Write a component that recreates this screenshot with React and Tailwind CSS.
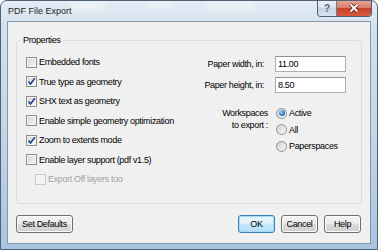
import React from 'react';

function CheckBox({ checked, disabled }) {
  return (
    <span
      className={`flex h-[11px] w-[11px] shrink-0 items-center justify-center border ${
        disabled
          ? 'border-[#cacaca] bg-[#f4f4f4]'
          : 'border-[#8e8f8f] bg-[linear-gradient(135deg,#d2d2d2,#f9f9f9)] shadow-[inset_0_0_0_1px_#f4f4f4]'
      }`}
    >
      {checked && (
        <svg width="9" height="9" viewBox="0 0 9 9">
          <path d="M1.5 4.5 L3.5 7 L7.8 1.2" fill="none" stroke="#21408f" strokeWidth="1.6" />
        </svg>
      )}
    </span>
  );
}

function Radio({ checked }) {
  return (
    <span className="flex h-[11px] w-[11px] shrink-0 items-center justify-center rounded-full border border-[#8e8f8f] bg-[linear-gradient(135deg,#d0d0d0,#fbfbfb)]">
      {checked && (
        <span className="h-[6px] w-[6px] rounded-full bg-[radial-gradient(circle_at_35%_35%,#a8dcff,#2a74c8_60%,#174f98)]" />
      )}
    </span>
  );
}

function Btn({ children, def, className = '' }) {
  return (
    <div
      className={`flex h-[18px] items-center justify-center rounded-[3px] border ${
        def
          ? 'border-[#3c7fb1] bg-[linear-gradient(#eaf6fd,#dcf1fc_50%,#c5e8fc_50%,#b3def7)] shadow-[inset_0_0_0_1px_#a4dcf8]'
          : 'border-[#707070] bg-[linear-gradient(#f2f2f2,#ebebeb_50%,#dddddd_50%,#cfcfcf)] shadow-[inset_0_0_0_1px_#fbfbfb]'
      } ${className}`}
    >
      {children}
    </div>
  );
}

const checks = [
  { label: 'Embedded fonts', checked: false },
  { label: 'True type as geometry', checked: true },
  { label: 'SHX text as geometry', checked: true },
  { label: 'Enable simple geometry optimization', checked: false },
  { label: 'Zoom to extents mode', checked: true },
  { label: 'Enable layer support (pdf v1.5)', checked: false },
];

export default function App() {
  return (
    <div className="relative flex h-[250px] w-[378px] flex-col overflow-hidden rounded-t-[7px] border border-[#4f6276] bg-[linear-gradient(180deg,#e4ecf4_0%,#d3e0ec_12%,#c3d5e7_55%,#a9c4e0_100%)] px-[6px] pb-[5px] font-['Liberation_Sans',Arial,sans-serif] text-black">
      {/* glass streaks */}
      <div className="absolute left-[70px] top-[2px] h-[6px] w-[34px] rounded-full bg-white/60 blur-[3px]" />
      <div className="absolute left-[145px] top-[1px] h-[5px] w-[26px] rounded-full bg-white/50 blur-[3px]" />
      <div className="absolute left-[205px] top-[2px] h-[6px] w-[50px] rounded-full bg-white/50 blur-[3px]" />

      {/* title bar */}
      <div className="relative flex h-[20px] items-start">
        <span className="pl-[1px] text-[9px] leading-[20px] text-[#1e1e1e]">PDF File Export</span>
        <div className="ml-auto mr-[-1px] mt-[-1px] flex h-[17px] overflow-hidden rounded-b-[4px] border border-t-0 border-[#4d5f72]">
          <div className="flex w-[19px] items-center justify-center border-r border-[#6d7f92] bg-[linear-gradient(#eef3f8,#d7e2ed_50%,#c3d3e3_50%,#d6e3ef)] text-[10px] font-bold text-[#5a6470]">
            ?
          </div>
          <div className="flex w-[34px] items-center justify-center bg-[linear-gradient(#e9a99c,#d77d6b_50%,#c5412a_50%,#d9583e)]">
            <svg width="12" height="10" viewBox="0 0 12 10">
              <path d="M2.5 1.5 L9.5 8.5 M9.5 1.5 L2.5 8.5" stroke="#5a1d12" strokeWidth="3.4" />
              <path d="M2.5 1.5 L9.5 8.5 M9.5 1.5 L2.5 8.5" stroke="#ffffff" strokeWidth="1.8" />
            </svg>
          </div>
        </div>
      </div>

      {/* client area */}
      <div className="flex flex-1 flex-col border border-[#8297ac] bg-[#f0f0f0] text-[9px] leading-[12px] tracking-[-0.35px]">
        <fieldset className="ml-[8px] mt-[12px] h-[170px] w-[346px] rounded-[3px] border border-[#d5dfe5]">
          <legend className="ml-[4px] px-[2px] leading-[12px]">Properties</legend>
          <div className="flex">
            {/* left column */}
            <div className="flex w-[173px] flex-col pl-[9px] pt-[6.5px]">
              {checks.map((c) => (
                <div key={c.label} className="flex h-[19.5px] items-center gap-[2px]">
                  <CheckBox checked={c.checked} />
                  <span className="whitespace-nowrap">{c.label}</span>
                </div>
              ))}
              <div className="ml-[9px] flex h-[19.5px] items-center gap-[2px]">
                <CheckBox disabled />
                <span className="whitespace-nowrap text-[#a3a3a3]">Export Off layers too</span>
              </div>
            </div>

            {/* right column */}
            <div className="flex flex-col pt-[10px]">
              <div className="grid grid-cols-[74px_71px] items-center gap-x-[11px] gap-y-[5px]">
                <span className="whitespace-nowrap text-right">Paper width, in:</span>
                <div className="flex h-[16px] items-center border border-[#abadb3] border-t-[#8f9399] bg-white pl-[2px]">11.00</div>
                <span className="whitespace-nowrap text-right">Paper height, in:</span>
                <div className="flex h-[16px] items-center border border-[#abadb3] border-t-[#8f9399] bg-white pl-[2px]">8.50</div>
              </div>
              <div className="mt-[12px] flex items-start">
                <div className="w-[78px] pt-[2px] text-right">
                  <div>Workspaces</div>
                  <div>to export :</div>
                </div>
                <div className="ml-[8px] flex flex-col">
                  {[
                    ['Active', true],
                    ['All', false],
                    ['Paperspaces', false],
                  ].map(([l, on]) => (
                    <div key={l} className="flex h-[16.5px] items-center gap-[2px]">
                      <Radio checked={on} />
                      <span>{l}</span>
                    </div>
                  ))}
                </div>
              </div>
            </div>
          </div>
        </fieldset>

        {/* buttons */}
        <div className="mt-[11px] flex pl-[8px] pr-[9px]">
          <Btn className="w-[57px]">Set Defaults</Btn>
          <div className="ml-auto flex gap-[6px]">
            <Btn def className="w-[37px]">OK</Btn>
            <Btn className="w-[37px]">Cancel</Btn>
            <Btn className="w-[37px]">Help</Btn>
          </div>
        </div>
      </div>
    </div>
  );
}
